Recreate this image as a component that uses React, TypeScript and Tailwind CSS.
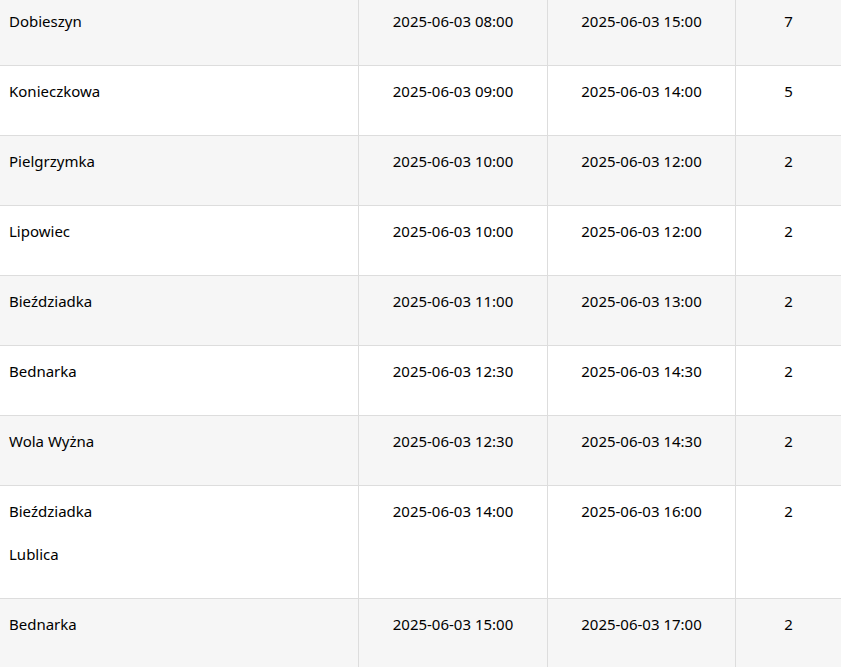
const rows: { places: string[]; start: string; end: string; count: number }[] = [
  { places: ["Dobieszyn"], start: "2025-06-03 08:00", end: "2025-06-03 15:00", count: 7 },
  { places: ["Konieczkowa"], start: "2025-06-03 09:00", end: "2025-06-03 14:00", count: 5 },
  { places: ["Pielgrzymka"], start: "2025-06-03 10:00", end: "2025-06-03 12:00", count: 2 },
  { places: ["Lipowiec"], start: "2025-06-03 10:00", end: "2025-06-03 12:00", count: 2 },
  { places: ["Bieździadka"], start: "2025-06-03 11:00", end: "2025-06-03 13:00", count: 2 },
  { places: ["Bednarka"], start: "2025-06-03 12:30", end: "2025-06-03 14:30", count: 2 },
  { places: ["Wola Wyżna"], start: "2025-06-03 12:30", end: "2025-06-03 14:30", count: 2 },
  { places: ["Bieździadka", "Lublica"], start: "2025-06-03 14:00", end: "2025-06-03 16:00", count: 2 },
  { places: ["Bednarka"], start: "2025-06-03 15:00", end: "2025-06-03 17:00", count: 2 },
];

export default function App() {
  return (
    <div className="h-[667px] overflow-hidden bg-white font-['Noto_Sans','Open_Sans',sans-serif] text-[15px] leading-[20px] text-black">
      <div className="-mt-[4px]">
        {rows.map((r, i) => (
          <div
            key={i}
            className={`grid grid-cols-[359px_189px_188px_1fr] border-b border-[#dddddd] ${i % 2 === 0 ? "bg-[#f6f6f6]" : "bg-white"}`}
          >
            <div className="flex flex-col gap-[23px] border-r border-[#dddddd] pl-[9px] pt-[15px] pb-[34px]">
              {r.places.map((p, j) => (
                <span key={j}>{p}</span>
              ))}
            </div>
            <div className="border-r border-[#dddddd] pt-[15px] text-center">{r.start}</div>
            <div className="border-r border-[#dddddd] pt-[15px] text-center">{r.end}</div>
            <div className="pt-[15px] text-center">{r.count}</div>
          </div>
        ))}
      </div>
    </div>
  );
}
